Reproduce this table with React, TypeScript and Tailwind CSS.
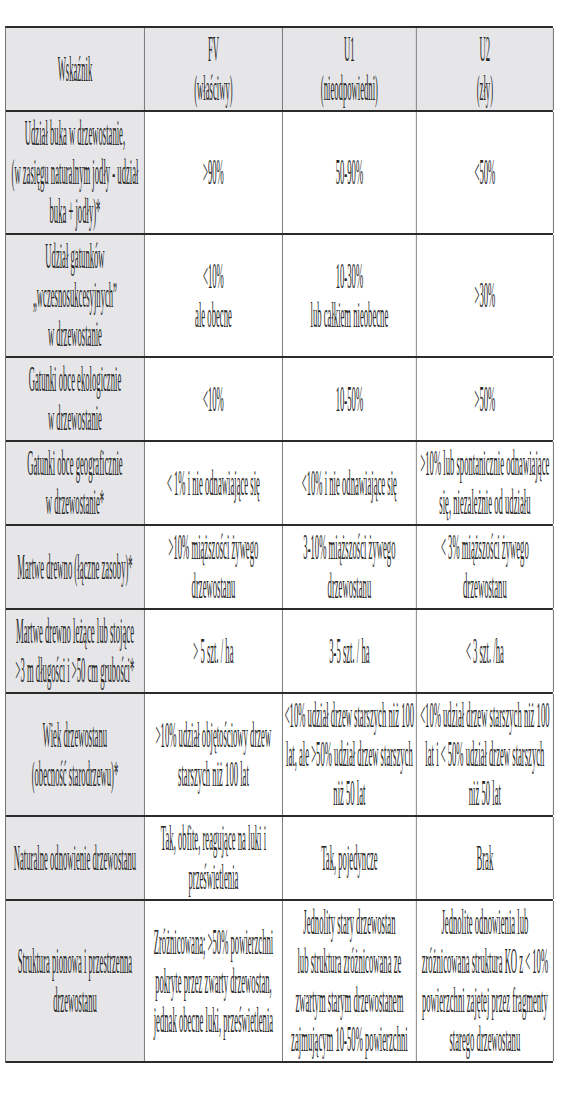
import React from "react";

type Row = { cells: string[][]; header?: boolean };

const rows: Row[] = [
  {
    header: true,
    cells: [["Wskaźnik"], ["FV", "(właściwy)"], ["U1", "(nieodpowiedni)"], ["U2", "(zły)"]],
  },
  {
    cells: [
      ["Udział buka w drzewostanie,", "(w zasięgu naturalnym jodły - udział", "buka + jodły)*"],
      [">90%"],
      ["50-90%"],
      ["<50%"],
    ],
  },
  {
    cells: [
      ["Udział gatunków", "„wczesnosukcesyjnych”", "w drzewostanie"],
      ["<10%", "ale obecne"],
      ["10-30%", "lub całkiem nieobecne"],
      [">30%"],
    ],
  },
  {
    cells: [["Gatunki obce ekologicznie", "w drzewostanie"], ["<10%"], ["10-50%"], [">50%"]],
  },
  {
    cells: [
      ["Gatunki obce geograficznie", "w drzewostanie*"],
      ["< 1% i nie odnawiające się"],
      ["<10% i nie odnawiające się"],
      [">10% lub spontanicznie odnawiające", "się, niezależnie od udziału"],
    ],
  },
  {
    cells: [
      ["Martwe drewno (łączne zasoby)*"],
      [">10% miąższości żywego", "drzewostanu"],
      ["3-10% miąższości żywego", "drzewostanu"],
      ["< 3% miąższości żywego", "drzewostanu"],
    ],
  },
  {
    cells: [
      ["Martwe drewno leżące lub stojące", ">3 m długości i >50 cm grubości*"],
      ["> 5 szt. / ha"],
      ["3-5 szt. / ha"],
      ["< 3 szt. /ha"],
    ],
  },
  {
    cells: [
      ["Wiek drzewostanu", "(obecność starodrzewu)*"],
      [">10% udział objętościowy drzew", "starszych niż 100 lat"],
      ["<10% udział drzew starszych niż 100", "lat, ale >50% udział drzew starszych", "niż 50 lat"],
      ["<10% udział drzew starszych niż 100", "lat i < 50% udział drzew starszych", "niż 50 lat"],
    ],
  },
  {
    cells: [
      ["Naturalne odnowienie drzewostanu"],
      ["Tak, obfite, reagujące na luki i", "prześwietlenia"],
      ["Tak, pojedyncze"],
      ["Brak"],
    ],
  },
  {
    cells: [
      ["Struktura pionowa i przestrzenna", "drzewostanu"],
      ["Zróżnicowana; >50% powierzchni", "pokryte przez zwarty drzewostan,", "jednak obecne luki, prześwietlenia"],
      ["Jednolity stary drzewostan", "lub struktura zróżnicowana ze", "zwartym starym drzewostanem", "zajmującym 10-50% powierzchni"],
      ["Jednolite odnowienia lub", "zróżnicowana struktura KO z < 10%", "powierzchni zajętej przez fragmenty", "starego drzewostanu"],
    ],
  },
];

export default function App() {
  return (
    <div className="w-[563px] h-[1095px] overflow-hidden bg-white pt-[26px] pl-[5px]">
      <div
        className="w-[2283px] origin-top-left scale-x-[0.24] border-t-2 border-l-[4.2px] border-t-[#2b2b2b] border-l-[#6b6b6b] text-[#262626] text-[36px] leading-[39px]"
        style={{ fontFamily: '"Liberation Serif", "Times New Roman", serif' }}
      >
        {rows.map((row, ri) => (
          <div
            key={ri}
            className="grid grid-cols-[579px_575px_558px_571px] border-b-2 border-b-[#2b2b2b]"
          >
            {row.cells.map((lines, ci) => (
              <div
                key={ci}
                className={
                  "flex flex-col items-center justify-center py-[2px] text-center whitespace-nowrap border-r-[4.2px] border-r-[#6b6b6b] " +
                  (row.header || ci === 0 ? "bg-[#e6e6e9]" : "bg-white")
                }
              >
                {lines.map((l, li) => (
                  <span key={li}>{l}</span>
                ))}
              </div>
            ))}
          </div>
        ))}
      </div>
    </div>
  );
}
